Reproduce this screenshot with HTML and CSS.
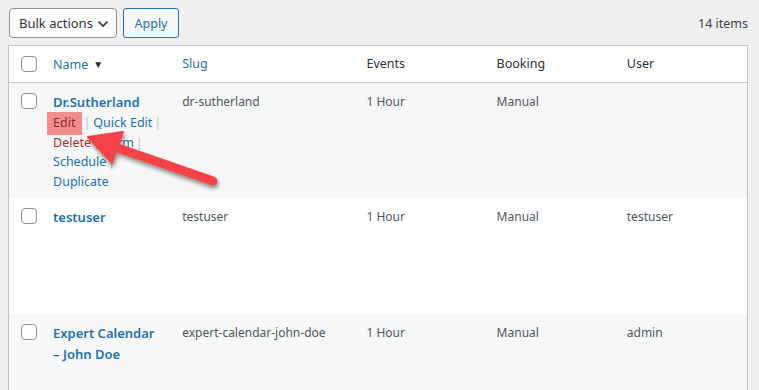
FILE: index.html
```html
<!DOCTYPE html>
<html>
<head>
<meta charset="utf-8">
<link rel="stylesheet" href="styles.css">
</head>
<body>
<div class="page">
  <div class="tablenav">
    <div class="actions">
      <div class="select">Bulk actions
        <svg class="chev" width="12" height="8" viewBox="0 0 12 8"><path d="M1.5 1.5 L6 6 L10.5 1.5" fill="none" stroke="#2c3338" stroke-width="1.6"/></svg>
      </div>
      <div class="button">Apply</div>
    </div>
    <div class="count">14 items</div>
  </div>
  <div class="tablewrap">
    <table class="list">
      <thead>
        <tr>
          <th class="cb"><span class="check"></span></th>
          <th class="c-name"><a>Name</a><span class="sort">▼</span></th>
          <th class="c-slug"><a>Slug</a></th>
          <th class="c-ev">Events</th>
          <th class="c-bk">Booking</th>
          <th class="c-user">User</th>
        </tr>
      </thead>
      <tbody>
        <tr class="alt">
          <td class="cb"><span class="check"></span></td>
          <td class="c-name">
            <a class="title">Dr.Sutherland</a>
            <div class="row-actions">
              <div><span class="edit-hl">Edit</span><span class="sep">|</span><a>Quick Edit</a><span class="sep">|</span></div>
              <div><a class="del">Delete</a><span class="sep">|</span><a>Form</a><span class="sep">|</span></div>
              <div><a>Schedule</a><span class="sep">|</span></div>
              <div><a>Duplicate</a></div>
            </div>
          </td>
          <td>dr-sutherland</td>
          <td>1 Hour</td>
          <td>Manual</td>
          <td></td>
        </tr>
        <tr>
          <td class="cb"><span class="check"></span></td>
          <td class="c-name"><a class="title">testuser</a></td>
          <td>testuser</td>
          <td>1 Hour</td>
          <td>Manual</td>
          <td>testuser</td>
        </tr>
        <tr class="alt">
          <td class="cb"><span class="check"></span></td>
          <td class="c-name"><a class="title">Expert Calendar – John Doe</a></td>
          <td>expert-calendar-john-doe</td>
          <td>1 Hour</td>
          <td>Manual</td>
          <td>admin</td>
        </tr>
      </tbody>
    </table>
    <svg class="arrow" width="759" height="390" viewBox="0 0 759 390">
      <defs>
        <filter id="sh" x="-20%" y="-20%" width="140%" height="160%">
          <feGaussianBlur in="SourceAlpha" stdDeviation="2"/>
          <feOffset dx="1" dy="3"/>
          <feComponentTransfer><feFuncA type="linear" slope="0.45"/></feComponentTransfer>
          <feMerge><feMergeNode/><feMergeNode in="SourceGraphic"/></feMerge>
        </filter>
      </defs>
      <g filter="url(#sh)">
        <line x1="213" y1="181" x2="112" y2="146" stroke="#f54246" stroke-width="9" stroke-linecap="round"/>
        <path d="M88 137 L123 132 L112 163 Z" fill="#f54246" stroke="#f54246" stroke-width="2" stroke-linejoin="round"/>
      </g>
    </svg>
  </div>
</div>
</body>
</html>
```
FILE: styles.css
```css
html, body {
  margin: 0;
  padding: 0;
  background: #f0f0f1;
}
body {
  font-family: "Noto Sans", "Open Sans", sans-serif;
  font-size: 12px;
  color: #50575e;
  overflow: hidden;
  width: 759px;
  height: 390px;
}
.page {
  padding: 8px 11px 0 8px;
}
.tablenav {
  display: flex;
  justify-content: space-between;
  align-items: center;
  height: 30px;
  margin-bottom: 7px;
}
.actions {
  display: flex;
  gap: 6px;
  padding-left: 1px;
}
.select {
  box-sizing: border-box;
  width: 108px;
  height: 30px;
  border: 1px solid #8c8f94;
  border-radius: 4px;
  background: #fff;
  color: #2c3338;
  font-size: 13px;
  display: flex;
  align-items: center;
  justify-content: space-between;
  padding: 0 7px 0 9px;
}
.chev { margin-top: 1px; }
.button {
  box-sizing: border-box;
  width: 56px;
  height: 30px;
  border: 1px solid #2271b1;
  border-radius: 3px;
  background: #f6f7f7;
  color: #2271b1;
  font-size: 12.5px;
  display: flex;
  align-items: center;
  justify-content: center;
}
.count {
  color: #3c434a;
  font-size: 12.5px;
}
.tablewrap {
  position: relative;
}
.list {
  width: 740px;
  border-collapse: collapse;
  table-layout: fixed;
  border: 1px solid #c3c4c7;
  background: #fff;
}
.list th, .list td {
  text-align: left;
  vertical-align: top;
  padding: 9px 10px 7px 10px;
  line-height: 20px;
  font-weight: 400;
  white-space: nowrap;
}
.list thead th {
  height: 20px;
  padding-top: 8px;
  padding-bottom: 7px;
  border-bottom: 1px solid #c3c4c7;
  color: #2c3338;
  font-size: 12.5px;
}
.list thead th a { color: #2271b1; }
.sort {
  font-size: 10px;
  color: #2c3338;
  margin-left: 5px;
  vertical-align: 1px;
}
.list th.cb, .list td.cb {
  width: 15px;
  padding: 8px 7px 0 12px;
}
.list thead th.cb { padding-top: 10px; }
.list tbody td.cb { padding-top: 10px; }
.check {
  display: block;
  box-sizing: border-box;
  width: 16px;
  height: 16px;
  border: 1px solid #8c8f94;
  border-radius: 4px;
  background: #fff;
}
.c-name { width: 109px; }
.c-slug { width: 164px; }
.c-ev, .c-bk, .c-user { width: 110px; }
.list tbody tr td { height: 100px; }
.list tbody tr.alt td { background: #f6f7f7; }
.list tbody tr:first-child td { height: 99px; }
.list tbody td.c-name { white-space: normal; }
.title {
  color: #2271b1;
  font-weight: 600;
  font-size: 13px;
}
.row-actions {
  color: #2271b1;
  font-size: 12.5px;
  white-space: nowrap;
}
.row-actions div { line-height: 19.6px; }
.row-actions a { color: #2271b1; }
.row-actions a.del { color: #b32d2e; }
.sep {
  color: #c3c4c7;
  margin: 0 3px 0 2px;
}
.row-actions .edit-hl + .sep { margin-left: 1px; }
.edit-hl {
  display: inline-block;
  background: #f38d8d;
  color: #8a2b2b;
  margin-left: -6px;
  padding: 1px 7px 2px 6px;
  margin-top: -1px;
  margin-bottom: -2px;
}
.arrow {
  position: absolute;
  left: -8px;
  top: -45px;
  pointer-events: none;
}
```
